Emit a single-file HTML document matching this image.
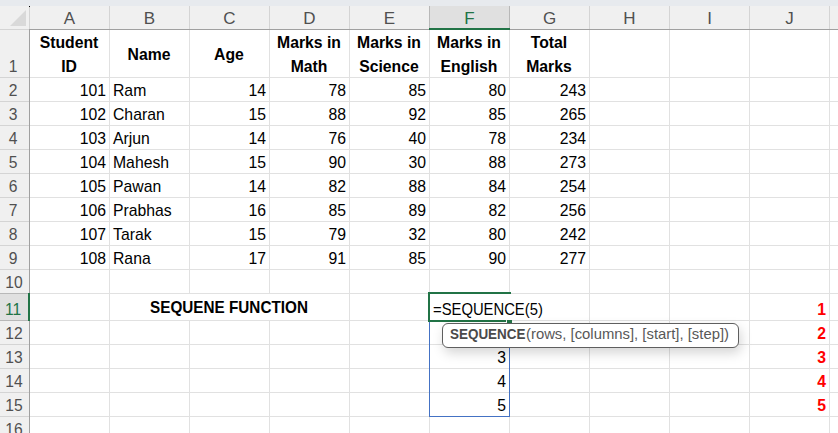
<!DOCTYPE html><html><head><meta charset="utf-8"><style>
html,body{margin:0;padding:0;}
body{width:838px;height:433px;overflow:hidden;position:relative;background:#fff;font-family:"Liberation Sans",sans-serif;}
body>div{position:absolute;}
.t{white-space:nowrap;}
</style></head><body>
<div style="left:0px;top:0px;width:838px;height:6px;background:#e7eaee;"></div><div style="left:0px;top:6px;width:838px;height:23px;background:#f0f0f0;"></div><div style="left:0px;top:29px;width:29px;height:404px;background:#f0f0f0;"></div><div style="left:430px;top:6px;width:79px;height:22px;background:#e0e0e0;"></div><div style="left:0px;top:294px;width:28px;height:26px;background:#e0e0e0;"></div><div style="left:109px;top:29px;width:1px;height:404px;background:#e1e1e1;"></div><div style="left:189px;top:29px;width:1px;height:404px;background:#e1e1e1;"></div><div style="left:269px;top:29px;width:1px;height:404px;background:#e1e1e1;"></div><div style="left:349px;top:29px;width:1px;height:404px;background:#e1e1e1;"></div><div style="left:429px;top:29px;width:1px;height:404px;background:#e1e1e1;"></div><div style="left:509px;top:29px;width:1px;height:404px;background:#e1e1e1;"></div><div style="left:589px;top:29px;width:1px;height:404px;background:#e1e1e1;"></div><div style="left:669px;top:29px;width:1px;height:404px;background:#e1e1e1;"></div><div style="left:749px;top:29px;width:1px;height:404px;background:#e1e1e1;"></div><div style="left:829px;top:29px;width:1px;height:404px;background:#e1e1e1;"></div><div style="left:29px;top:77px;width:809px;height:1px;background:#e1e1e1;"></div><div style="left:29px;top:101px;width:809px;height:1px;background:#e1e1e1;"></div><div style="left:29px;top:125px;width:809px;height:1px;background:#e1e1e1;"></div><div style="left:29px;top:149px;width:809px;height:1px;background:#e1e1e1;"></div><div style="left:29px;top:173px;width:809px;height:1px;background:#e1e1e1;"></div><div style="left:29px;top:197px;width:809px;height:1px;background:#e1e1e1;"></div><div style="left:29px;top:221px;width:809px;height:1px;background:#e1e1e1;"></div><div style="left:29px;top:245px;width:809px;height:1px;background:#e1e1e1;"></div><div style="left:29px;top:269px;width:809px;height:1px;background:#e1e1e1;"></div><div style="left:29px;top:293px;width:809px;height:1px;background:#e1e1e1;"></div><div style="left:29px;top:320px;width:809px;height:1px;background:#e1e1e1;"></div><div style="left:29px;top:344px;width:809px;height:1px;background:#e1e1e1;"></div><div style="left:29px;top:368px;width:809px;height:1px;background:#e1e1e1;"></div><div style="left:29px;top:392px;width:809px;height:1px;background:#e1e1e1;"></div><div style="left:29px;top:416px;width:809px;height:1px;background:#e1e1e1;"></div><div style="left:110px;top:294px;width:239px;height:26px;background:#fff;"></div><div style="left:109px;top:6px;width:1px;height:23px;background:#d4d4d4;"></div><div style="left:189px;top:6px;width:1px;height:23px;background:#d4d4d4;"></div><div style="left:269px;top:6px;width:1px;height:23px;background:#d4d4d4;"></div><div style="left:349px;top:6px;width:1px;height:23px;background:#d4d4d4;"></div><div style="left:429px;top:6px;width:1px;height:23px;background:#d4d4d4;"></div><div style="left:509px;top:6px;width:1px;height:23px;background:#d4d4d4;"></div><div style="left:589px;top:6px;width:1px;height:23px;background:#d4d4d4;"></div><div style="left:669px;top:6px;width:1px;height:23px;background:#d4d4d4;"></div><div style="left:749px;top:6px;width:1px;height:23px;background:#d4d4d4;"></div><div style="left:829px;top:6px;width:1px;height:23px;background:#d4d4d4;"></div><div style="left:0px;top:77px;width:29px;height:1px;background:#d4d4d4;"></div><div style="left:0px;top:101px;width:29px;height:1px;background:#d4d4d4;"></div><div style="left:0px;top:125px;width:29px;height:1px;background:#d4d4d4;"></div><div style="left:0px;top:149px;width:29px;height:1px;background:#d4d4d4;"></div><div style="left:0px;top:173px;width:29px;height:1px;background:#d4d4d4;"></div><div style="left:0px;top:197px;width:29px;height:1px;background:#d4d4d4;"></div><div style="left:0px;top:221px;width:29px;height:1px;background:#d4d4d4;"></div><div style="left:0px;top:245px;width:29px;height:1px;background:#d4d4d4;"></div><div style="left:0px;top:269px;width:29px;height:1px;background:#d4d4d4;"></div><div style="left:0px;top:293px;width:29px;height:1px;background:#d4d4d4;"></div><div style="left:0px;top:320px;width:29px;height:1px;background:#d4d4d4;"></div><div style="left:0px;top:344px;width:29px;height:1px;background:#d4d4d4;"></div><div style="left:0px;top:368px;width:29px;height:1px;background:#d4d4d4;"></div><div style="left:0px;top:392px;width:29px;height:1px;background:#d4d4d4;"></div><div style="left:0px;top:416px;width:29px;height:1px;background:#d4d4d4;"></div><div style="left:429px;top:6px;width:1px;height:22px;background:#b8b8b8;"></div><div style="left:509px;top:6px;width:1px;height:22px;background:#b8b8b8;"></div><div style="left:0px;top:293px;width:28px;height:1px;background:#b8b8b8;"></div><div style="left:0px;top:320px;width:28px;height:1px;background:#b8b8b8;"></div><div style="left:29px;top:29px;width:809px;height:1px;background:#a0a0a0;"></div><div style="left:0px;top:29px;width:29px;height:1px;background:#d4d4d4;"></div><div style="left:29px;top:6px;width:1px;height:23px;background:#d4d4d4;"></div><div style="left:29px;top:29px;width:1px;height:404px;background:#a0a0a0;"></div><div style="left:429px;top:28px;width:81px;height:2px;background:#217346;"></div><div style="left:28px;top:293px;width:2px;height:28px;background:#217346;"></div><svg style="position:absolute;left:0;top:6px" width="29" height="23"><polygon points="26,4 26,20 10,20" fill="#d9d9d9"/></svg><div style="left:29px;top:6px;width:1px;height:1px;background:#000;"></div><div class="t" style="top:9px;font-size:17px;line-height:20px;color:#505050;left:-80.5px;width:300px;text-align:center;">A</div><div class="t" style="top:9px;font-size:17px;line-height:20px;color:#505050;left:-0.5px;width:300px;text-align:center;">B</div><div class="t" style="top:9px;font-size:17px;line-height:20px;color:#505050;left:79.5px;width:300px;text-align:center;">C</div><div class="t" style="top:9px;font-size:17px;line-height:20px;color:#505050;left:159.5px;width:300px;text-align:center;">D</div><div class="t" style="top:9px;font-size:17px;line-height:20px;color:#505050;left:239.5px;width:300px;text-align:center;">E</div><div class="t" style="top:9px;font-size:17px;line-height:20px;color:#217346;left:319.5px;width:300px;text-align:center;">F</div><div class="t" style="top:9px;font-size:17px;line-height:20px;color:#505050;left:399.5px;width:300px;text-align:center;">G</div><div class="t" style="top:9px;font-size:17px;line-height:20px;color:#505050;left:479.5px;width:300px;text-align:center;">H</div><div class="t" style="top:9px;font-size:17px;line-height:20px;color:#505050;left:559.5px;width:300px;text-align:center;">I</div><div class="t" style="top:9px;font-size:17px;line-height:20px;color:#505050;left:639.5px;width:300px;text-align:center;">J</div><div class="t" style="top:57px;font-size:17px;line-height:20px;color:#505050;left:-137.5px;width:300px;text-align:center;transform:scaleX(0.92);transform-origin:center top;">1</div><div class="t" style="top:81px;font-size:17px;line-height:20px;color:#505050;left:-137.5px;width:300px;text-align:center;transform:scaleX(0.92);transform-origin:center top;">2</div><div class="t" style="top:105px;font-size:17px;line-height:20px;color:#505050;left:-137.5px;width:300px;text-align:center;transform:scaleX(0.92);transform-origin:center top;">3</div><div class="t" style="top:129px;font-size:17px;line-height:20px;color:#505050;left:-137.5px;width:300px;text-align:center;transform:scaleX(0.92);transform-origin:center top;">4</div><div class="t" style="top:153px;font-size:17px;line-height:20px;color:#505050;left:-137.5px;width:300px;text-align:center;transform:scaleX(0.92);transform-origin:center top;">5</div><div class="t" style="top:177px;font-size:17px;line-height:20px;color:#505050;left:-137.5px;width:300px;text-align:center;transform:scaleX(0.92);transform-origin:center top;">6</div><div class="t" style="top:201px;font-size:17px;line-height:20px;color:#505050;left:-137.5px;width:300px;text-align:center;transform:scaleX(0.92);transform-origin:center top;">7</div><div class="t" style="top:225px;font-size:17px;line-height:20px;color:#505050;left:-137.5px;width:300px;text-align:center;transform:scaleX(0.92);transform-origin:center top;">8</div><div class="t" style="top:249px;font-size:17px;line-height:20px;color:#505050;left:-137.5px;width:300px;text-align:center;transform:scaleX(0.92);transform-origin:center top;">9</div><div class="t" style="top:273px;font-size:17px;line-height:20px;color:#505050;left:-136.5px;width:300px;text-align:center;transform:scaleX(0.92);transform-origin:center top;">10</div><div class="t" style="top:300px;font-size:17px;line-height:20px;color:#217346;left:-137.5px;width:300px;text-align:center;transform:scaleX(0.92);transform-origin:center top;">11</div><div class="t" style="top:324px;font-size:17px;line-height:20px;color:#505050;left:-136.5px;width:300px;text-align:center;transform:scaleX(0.92);transform-origin:center top;">12</div><div class="t" style="top:348px;font-size:17px;line-height:20px;color:#505050;left:-136.5px;width:300px;text-align:center;transform:scaleX(0.92);transform-origin:center top;">13</div><div class="t" style="top:372px;font-size:17px;line-height:20px;color:#505050;left:-136.5px;width:300px;text-align:center;transform:scaleX(0.92);transform-origin:center top;">14</div><div class="t" style="top:396px;font-size:17px;line-height:20px;color:#505050;left:-136.5px;width:300px;text-align:center;transform:scaleX(0.92);transform-origin:center top;">15</div><div class="t" style="top:420px;font-size:17px;line-height:20px;color:#505050;left:-136.5px;width:300px;text-align:center;transform:scaleX(0.92);transform-origin:center top;">16</div><div class="t" style="top:33px;font-size:15.75px;line-height:20px;color:#000;font-weight:bold;left:-81.0px;width:300px;text-align:center;">Student</div><div class="t" style="top:57px;font-size:15.75px;line-height:20px;color:#000;font-weight:bold;left:-81.0px;width:300px;text-align:center;">ID</div><div class="t" style="top:45px;font-size:15.75px;line-height:20px;color:#000;font-weight:bold;left:-1.0px;width:300px;text-align:center;">Name</div><div class="t" style="top:45px;font-size:15.75px;line-height:20px;color:#000;font-weight:bold;left:79.0px;width:300px;text-align:center;">Age</div><div class="t" style="top:33px;font-size:15.75px;line-height:20px;color:#000;font-weight:bold;left:159.0px;width:300px;text-align:center;">Marks in</div><div class="t" style="top:57px;font-size:15.75px;line-height:20px;color:#000;font-weight:bold;left:159.0px;width:300px;text-align:center;">Math</div><div class="t" style="top:33px;font-size:15.75px;line-height:20px;color:#000;font-weight:bold;left:239.0px;width:300px;text-align:center;">Marks in</div><div class="t" style="top:57px;font-size:15.75px;line-height:20px;color:#000;font-weight:bold;left:239.0px;width:300px;text-align:center;">Science</div><div class="t" style="top:33px;font-size:15.75px;line-height:20px;color:#000;font-weight:bold;left:319.0px;width:300px;text-align:center;">Marks in</div><div class="t" style="top:57px;font-size:15.75px;line-height:20px;color:#000;font-weight:bold;left:319.0px;width:300px;text-align:center;">English</div><div class="t" style="top:33px;font-size:15.75px;line-height:20px;color:#000;font-weight:bold;left:399.0px;width:300px;text-align:center;">Total</div><div class="t" style="top:57px;font-size:15.75px;line-height:20px;color:#000;font-weight:bold;left:399.0px;width:300px;text-align:center;">Marks</div><div class="t" style="top:81px;font-size:15.75px;line-height:20px;color:#000;right:732px;text-align:right;">101</div><div class="t" style="top:81px;font-size:15.75px;line-height:20px;color:#000;left:113px;">Ram</div><div class="t" style="top:81px;font-size:15.75px;line-height:20px;color:#000;right:572px;text-align:right;">14</div><div class="t" style="top:81px;font-size:15.75px;line-height:20px;color:#000;right:492px;text-align:right;">78</div><div class="t" style="top:81px;font-size:15.75px;line-height:20px;color:#000;right:412px;text-align:right;">85</div><div class="t" style="top:81px;font-size:15.75px;line-height:20px;color:#000;right:332px;text-align:right;">80</div><div class="t" style="top:81px;font-size:15.75px;line-height:20px;color:#000;right:252px;text-align:right;">243</div><div class="t" style="top:105px;font-size:15.75px;line-height:20px;color:#000;right:732px;text-align:right;">102</div><div class="t" style="top:105px;font-size:15.75px;line-height:20px;color:#000;left:113px;">Charan</div><div class="t" style="top:105px;font-size:15.75px;line-height:20px;color:#000;right:572px;text-align:right;">15</div><div class="t" style="top:105px;font-size:15.75px;line-height:20px;color:#000;right:492px;text-align:right;">88</div><div class="t" style="top:105px;font-size:15.75px;line-height:20px;color:#000;right:412px;text-align:right;">92</div><div class="t" style="top:105px;font-size:15.75px;line-height:20px;color:#000;right:332px;text-align:right;">85</div><div class="t" style="top:105px;font-size:15.75px;line-height:20px;color:#000;right:252px;text-align:right;">265</div><div class="t" style="top:129px;font-size:15.75px;line-height:20px;color:#000;right:732px;text-align:right;">103</div><div class="t" style="top:129px;font-size:15.75px;line-height:20px;color:#000;left:113px;">Arjun</div><div class="t" style="top:129px;font-size:15.75px;line-height:20px;color:#000;right:572px;text-align:right;">14</div><div class="t" style="top:129px;font-size:15.75px;line-height:20px;color:#000;right:492px;text-align:right;">76</div><div class="t" style="top:129px;font-size:15.75px;line-height:20px;color:#000;right:412px;text-align:right;">40</div><div class="t" style="top:129px;font-size:15.75px;line-height:20px;color:#000;right:332px;text-align:right;">78</div><div class="t" style="top:129px;font-size:15.75px;line-height:20px;color:#000;right:252px;text-align:right;">234</div><div class="t" style="top:153px;font-size:15.75px;line-height:20px;color:#000;right:732px;text-align:right;">104</div><div class="t" style="top:153px;font-size:15.75px;line-height:20px;color:#000;left:113px;">Mahesh</div><div class="t" style="top:153px;font-size:15.75px;line-height:20px;color:#000;right:572px;text-align:right;">15</div><div class="t" style="top:153px;font-size:15.75px;line-height:20px;color:#000;right:492px;text-align:right;">90</div><div class="t" style="top:153px;font-size:15.75px;line-height:20px;color:#000;right:412px;text-align:right;">30</div><div class="t" style="top:153px;font-size:15.75px;line-height:20px;color:#000;right:332px;text-align:right;">88</div><div class="t" style="top:153px;font-size:15.75px;line-height:20px;color:#000;right:252px;text-align:right;">273</div><div class="t" style="top:177px;font-size:15.75px;line-height:20px;color:#000;right:732px;text-align:right;">105</div><div class="t" style="top:177px;font-size:15.75px;line-height:20px;color:#000;left:113px;">Pawan</div><div class="t" style="top:177px;font-size:15.75px;line-height:20px;color:#000;right:572px;text-align:right;">14</div><div class="t" style="top:177px;font-size:15.75px;line-height:20px;color:#000;right:492px;text-align:right;">82</div><div class="t" style="top:177px;font-size:15.75px;line-height:20px;color:#000;right:412px;text-align:right;">88</div><div class="t" style="top:177px;font-size:15.75px;line-height:20px;color:#000;right:332px;text-align:right;">84</div><div class="t" style="top:177px;font-size:15.75px;line-height:20px;color:#000;right:252px;text-align:right;">254</div><div class="t" style="top:201px;font-size:15.75px;line-height:20px;color:#000;right:732px;text-align:right;">106</div><div class="t" style="top:201px;font-size:15.75px;line-height:20px;color:#000;left:113px;">Prabhas</div><div class="t" style="top:201px;font-size:15.75px;line-height:20px;color:#000;right:572px;text-align:right;">16</div><div class="t" style="top:201px;font-size:15.75px;line-height:20px;color:#000;right:492px;text-align:right;">85</div><div class="t" style="top:201px;font-size:15.75px;line-height:20px;color:#000;right:412px;text-align:right;">89</div><div class="t" style="top:201px;font-size:15.75px;line-height:20px;color:#000;right:332px;text-align:right;">82</div><div class="t" style="top:201px;font-size:15.75px;line-height:20px;color:#000;right:252px;text-align:right;">256</div><div class="t" style="top:225px;font-size:15.75px;line-height:20px;color:#000;right:732px;text-align:right;">107</div><div class="t" style="top:225px;font-size:15.75px;line-height:20px;color:#000;left:113px;">Tarak</div><div class="t" style="top:225px;font-size:15.75px;line-height:20px;color:#000;right:572px;text-align:right;">15</div><div class="t" style="top:225px;font-size:15.75px;line-height:20px;color:#000;right:492px;text-align:right;">79</div><div class="t" style="top:225px;font-size:15.75px;line-height:20px;color:#000;right:412px;text-align:right;">32</div><div class="t" style="top:225px;font-size:15.75px;line-height:20px;color:#000;right:332px;text-align:right;">80</div><div class="t" style="top:225px;font-size:15.75px;line-height:20px;color:#000;right:252px;text-align:right;">242</div><div class="t" style="top:249px;font-size:15.75px;line-height:20px;color:#000;right:732px;text-align:right;">108</div><div class="t" style="top:249px;font-size:15.75px;line-height:20px;color:#000;left:113px;">Rana</div><div class="t" style="top:249px;font-size:15.75px;line-height:20px;color:#000;right:572px;text-align:right;">17</div><div class="t" style="top:249px;font-size:15.75px;line-height:20px;color:#000;right:492px;text-align:right;">91</div><div class="t" style="top:249px;font-size:15.75px;line-height:20px;color:#000;right:412px;text-align:right;">85</div><div class="t" style="top:249px;font-size:15.75px;line-height:20px;color:#000;right:332px;text-align:right;">90</div><div class="t" style="top:249px;font-size:15.75px;line-height:20px;color:#000;right:252px;text-align:right;">277</div><div class="t" style="top:298px;font-size:15.75px;line-height:20px;color:#000;font-weight:bold;left:79px;width:300px;text-align:center;transform:scaleX(0.97);transform-origin:center top;">SEQUENE FUNCTION</div><div class="t" style="top:324px;font-size:15.75px;line-height:20px;color:#000;right:332px;text-align:right;">2</div><div class="t" style="top:348px;font-size:15.75px;line-height:20px;color:#000;right:332px;text-align:right;">3</div><div class="t" style="top:372px;font-size:15.75px;line-height:20px;color:#000;right:332px;text-align:right;">4</div><div class="t" style="top:396px;font-size:15.75px;line-height:20px;color:#000;right:332px;text-align:right;">5</div><div style="left:429px;top:320px;width:1px;height:97px;background:#4472c4;"></div><div style="left:509px;top:320px;width:1px;height:97px;background:#4472c4;"></div><div style="left:429px;top:416px;width:81px;height:1px;background:#4472c4;"></div><div style="left:428px;top:292px;width:83px;height:2px;background:#217346;"></div><div style="left:428px;top:292px;width:2px;height:30px;background:#217346;"></div><div style="left:428px;top:320px;width:78px;height:2px;background:#217346;"></div><div style="left:507px;top:320px;width:5px;height:3px;background:#217346;"></div><div style="left:430px;top:294px;width:116px;height:26px;background:#fff;"></div><div class="t" style="top:300px;font-size:15.75px;line-height:20px;color:#000;left:433px;transform:scaleX(0.94);transform-origin:left top;">=SEQUENCE(5)</div><div class="t" style="top:300px;font-size:15.75px;line-height:20px;color:#ff0000;font-weight:bold;right:12px;text-align:right;">1</div><div class="t" style="top:324px;font-size:15.75px;line-height:20px;color:#ff0000;font-weight:bold;right:12px;text-align:right;">2</div><div class="t" style="top:348px;font-size:15.75px;line-height:20px;color:#ff0000;font-weight:bold;right:12px;text-align:right;">3</div><div class="t" style="top:372px;font-size:15.75px;line-height:20px;color:#ff0000;font-weight:bold;right:12px;text-align:right;">4</div><div class="t" style="top:396px;font-size:15.75px;line-height:20px;color:#ff0000;font-weight:bold;right:12px;text-align:right;">5</div><div style="left:442px;top:323px;width:295px;height:23px;background:#fff;border:1px solid #5f5f5f;border-radius:6px;box-shadow:2px 5px 12px rgba(0,0,0,0.17)"></div><div class="t" style="top:324px;font-size:15px;line-height:20px;color:#4a4a4a;font-weight:bold;left:450px;transform:scaleX(0.896);transform-origin:left top;">SEQUENCE</div><div class="t" style="top:324px;font-size:15px;line-height:20px;color:#585858;left:526px;transform:scaleX(0.99);transform-origin:left top;">(rows, [columns], [start], [step])</div>
</body></html>
